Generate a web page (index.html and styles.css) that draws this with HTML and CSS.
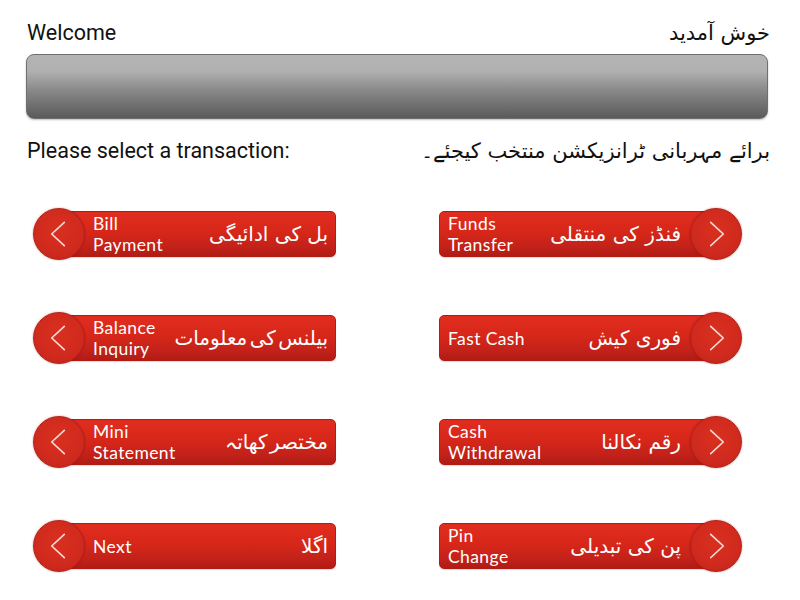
FILE: index.html
```html
<!DOCTYPE html>
<html lang="en">
<head>
<meta charset="utf-8">
<title>ATM</title>
<link rel="stylesheet" href="styles.css">
</head>
<body>
<div class="page">
  <div class="header">
    <span class="en-title">Welcome</span>
    <span class="ur-title" dir="rtl" lang="ur">خوش آمدید</span>
  </div>
  <div class="display"></div>
  <div class="prompt">
    <span class="en-title">Please select a transaction:</span>
    <span class="ur-title" dir="rtl" lang="ur">برائے مہربانی ٹرانزیکشن منتخب کیجئے۔</span>
  </div>
  <div class="grid">
    <div class="btn left">
      <div class="circle"><svg viewBox="0 0 20 30" class="chev"><polyline points="17,2 3,15 17,28"/></svg></div>
      <div class="bar"><span class="en">Bill<br>Payment</span><span class="ur" dir="rtl" lang="ur">بل کی ادائیگی</span></div>
    </div>
    <div class="btn right">
      <div class="bar"><span class="en">Funds<br>Transfer</span><span class="ur" dir="rtl" lang="ur">فنڈز کی منتقلی</span></div>
      <div class="circle"><svg viewBox="0 0 20 30" class="chev"><polyline points="3,2 17,15 3,28"/></svg></div>
    </div>
    <div class="btn left">
      <div class="circle"><svg viewBox="0 0 20 30" class="chev"><polyline points="17,2 3,15 17,28"/></svg></div>
      <div class="bar"><span class="en">Balance<br>Inquiry</span><span class="ur tight" dir="rtl" lang="ur">بیلنس کی معلومات</span></div>
    </div>
    <div class="btn right">
      <div class="bar"><span class="en">Fast Cash</span><span class="ur" dir="rtl" lang="ur">فوری کیش</span></div>
      <div class="circle"><svg viewBox="0 0 20 30" class="chev"><polyline points="3,2 17,15 3,28"/></svg></div>
    </div>
    <div class="btn left">
      <div class="circle"><svg viewBox="0 0 20 30" class="chev"><polyline points="17,2 3,15 17,28"/></svg></div>
      <div class="bar"><span class="en">Mini<br>Statement</span><span class="ur tight" dir="rtl" lang="ur">مختصر کھاتہ</span></div>
    </div>
    <div class="btn right">
      <div class="bar"><span class="en">Cash<br>Withdrawal</span><span class="ur" dir="rtl" lang="ur">رقم نکالنا</span></div>
      <div class="circle"><svg viewBox="0 0 20 30" class="chev"><polyline points="3,2 17,15 3,28"/></svg></div>
    </div>
    <div class="btn left">
      <div class="circle"><svg viewBox="0 0 20 30" class="chev"><polyline points="17,2 3,15 17,28"/></svg></div>
      <div class="bar"><span class="en">Next</span><span class="ur" dir="rtl" lang="ur">اگلا</span></div>
    </div>
    <div class="btn right">
      <div class="bar"><span class="en">Pin<br>Change</span><span class="ur" dir="rtl" lang="ur">پن کی تبدیلی</span></div>
      <div class="circle"><svg viewBox="0 0 20 30" class="chev"><polyline points="3,2 17,15 3,28"/></svg></div>
    </div>
  </div>
</div>
</body>
</html>
```

FILE: styles.css
```css
html, body {
  margin: 0;
  padding: 0;
  background: #ffffff;
}

.page {
  width: 800px;
  height: 600px;
  padding-top: 20px;
  box-sizing: border-box;
}

.header,
.prompt {
  display: flex;
  justify-content: space-between;
  align-items: center;
  padding: 0 30px 0 27px;
  height: 26px;
}

.prompt {
  margin-top: 19px;
}

.en-title {
  font-family: "Roboto", sans-serif;
  font-size: 21.5px;
  line-height: 26px;
  color: #111;
}

.ur-title {
  font-family: "DejaVu Sans", sans-serif;
  font-size: 21px;
  line-height: 26px;
  color: #111;
}

.display {
  margin: 8px 32px 0 26px;
  height: 65px;
  box-sizing: border-box;
  border: 1px solid #6f6f6f;
  border-radius: 8px;
  background: linear-gradient(to bottom, #b3b3b3 0%, #b1b1b1 25%, #8a8a8a 55%, #5a5a5a 100%);
  box-shadow: 0 1px 2px rgba(0, 0, 0, 0.25);
}

.grid {
  margin-top: 44px;
  padding-left: 33px;
  display: grid;
  grid-template-columns: 303px 303px;
  column-gap: 103px;
  row-gap: 52px;
  grid-auto-rows: 52px;
}

.btn {
  display: flex;
  align-items: center;
  height: 52px;
}

.circle {
  position: relative;
  z-index: 2;
  flex: 0 0 52px;
  width: 52px;
  height: 52px;
  border-radius: 50%;
  box-sizing: border-box;
  background: radial-gradient(circle at 50% 40%, #d9301f 0%, #d02a1e 60%, #bf2219 100%);
  border: 1px solid #b41f17;
  box-shadow: 0 0 2px rgba(120, 20, 10, 0.45);
  display: flex;
  align-items: center;
  justify-content: center;
}

.chev {
  width: 18px;
  height: 28px;
  fill: none;
  stroke: #f8ddd8;
  stroke-width: 1.8;
  stroke-linecap: round;
  stroke-linejoin: round;
}

.left .chev {
  margin-left: -2px;
}

.right .chev {
  margin-left: 2px;
}

.bar {
  flex: 1 1 auto;
  height: 46px;
  box-sizing: border-box;
  border-radius: 5px;
  background: linear-gradient(to bottom, #e02d20 0%, #d72719 45%, #c2211a 80%, #b01c14 100%);
  border: 1px solid #b31c14;
  box-shadow: 0 1px 1px rgba(0, 0, 0, 0.15);
  display: flex;
  align-items: center;
  justify-content: space-between;
  color: #ffffff;
}

.left .bar {
  margin-left: -26px;
  padding: 0 7px 0 33px;
}

.right .bar {
  margin-right: -26px;
  padding: 0 34px 0 8px;
}

.en {
  font-family: "Lato", "Open Sans", sans-serif;
  font-size: 17.5px;
  line-height: 21px;
  letter-spacing: 0.4px;
}

.ur {
  font-family: "DejaVu Sans", sans-serif;
  font-size: 20px;
  line-height: 30px;
}

.tight {
  word-spacing: -4px;
}
```
